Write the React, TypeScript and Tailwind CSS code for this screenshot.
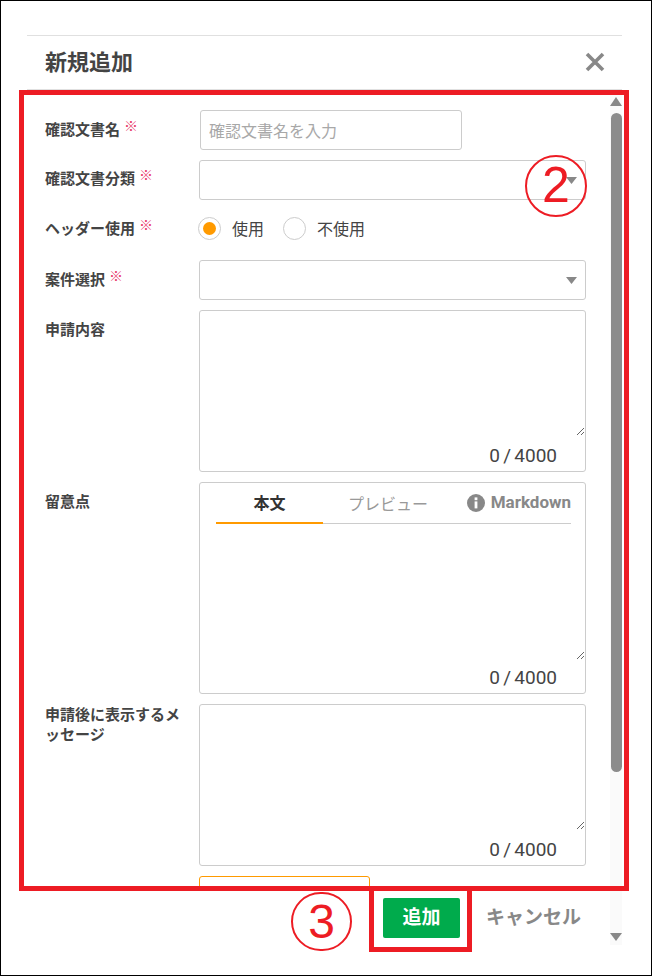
const fontStack = { fontFamily: '"Noto Sans CJK JP", "Noto Sans", sans-serif' };

function Required() {
  return <span className="ml-[4px] relative -top-[4px] text-[14px] font-medium text-[#e8386b]">※</span>;
}

function Label({ text, required, top }: { text: string; required?: boolean; top: string }) {
  return (
    <div className={`w-[140px] mr-[14px] shrink-0 text-[15px] leading-[20px] font-bold text-[#444444] ${top}`}>
      {text}
      {required && <Required />}
    </div>
  );
}

function SelectBox() {
  return (
    <div className="w-[387px] h-[40px] border border-[#cccccc] rounded-[3px] flex items-center justify-end pr-[8px] bg-white">
      <svg width="11" height="7" viewBox="0 0 11 7">
        <path d="M0 0h11L5.5 7z" fill="#888888" />
      </svg>
    </div>
  );
}

function Counter() {
  return (
    <div className="h-[36px] flex items-center justify-end pr-[28px] text-[19px] [word-spacing:-1.5px] text-[#444444] font-['Roboto',sans-serif]">
      0 / 4000
    </div>
  );
}

function TextBox() {
  return (
    <div className="w-[387px] h-[162px] border border-[#cccccc] rounded-[3px] bg-white">
      <textarea className="block w-full h-[125px] mb-[2px] outline-none" />
      <Counter />
    </div>
  );
}

function Radio({ label, checked }: { label: string; checked?: boolean }) {
  return (
    <div className="flex items-center">
      <span className="w-[23px] h-[23px] rounded-full border border-[#cccccc] flex items-center justify-center">
        {checked && <span className="w-[13px] h-[13px] rounded-full bg-[#ff9a00]" />}
      </span>
      <span className="ml-[11px] text-[16px] text-[#444444]">{label}</span>
    </div>
  );
}

export default function App() {
  return (
    <div className="relative w-[655px] h-[979px] bg-white overflow-hidden" style={fontStack}>
      <div className="w-[652px] h-[976px] border border-black">
        <div className="ml-[26px] mt-[34px] w-[595px]">
          {/* header */}
          <div className="h-[55px] border-y border-[#e0e0e0] flex items-center justify-between pl-[18px] pr-[17px]">
            <h1 className="text-[22px] font-bold text-[#444444] -mt-[5px]">新規追加</h1>
            <svg width="20" height="20" viewBox="0 0 20 20" className="-mt-[2px]">
              <path d="M2 2l16 16M18 2L2 18" stroke="#888888" strokeWidth="3.6" />
            </svg>
          </div>

          <div className="flex">
            <div className="w-[583px]">
              {/* form */}
              <div className="h-[798px] overflow-hidden pl-[18px] pt-[20px] flex flex-col gap-[10px]">
                <div className="flex shrink-0">
                  <Label text="確認文書名" required top="pt-[9px]" />
                  <input
                    placeholder="確認文書名を入力"
                    className="ml-[1px] w-[262px] h-[40px] border border-[#cccccc] rounded-[3px] px-[8px] text-[16px] placeholder:text-[#a8a8a8] outline-none"
                  />
                </div>
                <div className="flex shrink-0">
                  <Label text="確認文書分類" required top="pt-[8px]" />
                  <SelectBox />
                </div>
                <div className="flex shrink-0 h-[40px] items-center">
                  <Label text="ヘッダー使用" required top="-mt-[4px]" />
                  <div className="flex items-center gap-[19px] -mt-[4px] -ml-[1px]">
                    <Radio label="使用" checked />
                    <Radio label="不使用" />
                  </div>
                </div>
                <div className="flex shrink-0">
                  <Label text="案件選択" required top="pt-[9px]" />
                  <SelectBox />
                </div>
                <div className="flex shrink-0">
                  <Label text="申請内容" top="pt-[9px]" />
                  <TextBox />
                </div>
                <div className="flex shrink-0">
                  <Label text="留意点" top="pt-[9px]" />
                  <div className="w-[387px] h-[212px] border border-[#cccccc] rounded-[3px]">
                    <div className="ml-[16px] mr-[14px] h-[41px] border-b border-[#cccccc] flex items-center">
                      <div className="w-[107px] h-[41px] border-b-2 border-[#ff9a00] flex items-center justify-center text-[16px] font-bold text-[#333333]">
                        本文
                      </div>
                      <div className="ml-[25px] text-[16px] text-[#999999]">プレビュー</div>
                      <div className="ml-auto flex items-center text-[17px] font-bold text-[#888888] font-['Roboto',sans-serif]">
                        <svg width="18" height="18" viewBox="0 0 18 18" className="mr-[6px]">
                          <circle cx="9" cy="9" r="9" fill="#888888" />
                          <rect x="7.6" y="3.4" width="2.8" height="2.8" fill="#ffffff" />
                          <rect x="7.6" y="7.4" width="2.8" height="7" fill="#ffffff" />
                        </svg>
                        Markdown
                      </div>
                    </div>
                    <textarea className="block w-full h-[136px] outline-none" />
                    <Counter />
                  </div>
                </div>
                <div className="flex shrink-0">
                  <Label text="申請後に表示するメッセージ" top="pt-[0px]" />
                  <TextBox />
                </div>
                <div className="flex shrink-0">
                  <div className="w-[154px] shrink-0" />
                  <div className="w-[171px] h-[40px] border border-[#ff9a00] rounded-[3px]" />
                </div>
              </div>

              {/* footer */}
              <div className="flex items-center pt-[10px] pl-[356px]">
                <button className="w-[77px] h-[40px] pb-[3px] rounded-[2px] bg-[#00ab4c] text-[19px] font-bold text-white">
                  追加
                </button>
                <button className="ml-[26px] pb-[3px] text-[19px] font-bold text-[#888888]">キャンセル</button>
              </div>
            </div>

            {/* scrollbar */}
            <div className="w-[12px] h-[855px] bg-[#fafafa] flex flex-col items-center pt-[7px]">
              <svg width="12" height="9" viewBox="0 0 12 9" className="shrink-0">
                <path d="M6 0L12 9H0z" fill="#888888" />
              </svg>
              <div className="w-[11px] h-[659px] mt-[7px] rounded-full bg-[#8c8c8c]" />
              <svg width="12" height="8" viewBox="0 0 12 8" className="mt-[161px] shrink-0">
                <path d="M0 0h12L6 8z" fill="#888888" />
              </svg>
            </div>
          </div>
        </div>
      </div>

      {/* annotations */}
      <div className="absolute left-[19px] top-[90px] w-[610px] h-[801px] border-[5px] border-[#ed1c24]" />
      <div className="absolute left-[369px] top-[886px] w-[103px] h-[66px] border-[5px] border-[#ed1c24]" />
      <div className="absolute left-[525px] top-[155px] w-[62px] h-[62px] pb-[3px] rounded-full border-2 border-[#ed1c24] flex items-center justify-center text-[50px] leading-none text-[#ed1c24] font-['Liberation_Sans',sans-serif]">
        2
      </div>
      <div className="absolute left-[291px] top-[892px] w-[61px] h-[59px] rounded-full border-2 border-[#ed1c24] flex items-center justify-center text-[48px] leading-none text-[#ed1c24] font-['Liberation_Sans',sans-serif]">
        3
      </div>
    </div>
  );
}
